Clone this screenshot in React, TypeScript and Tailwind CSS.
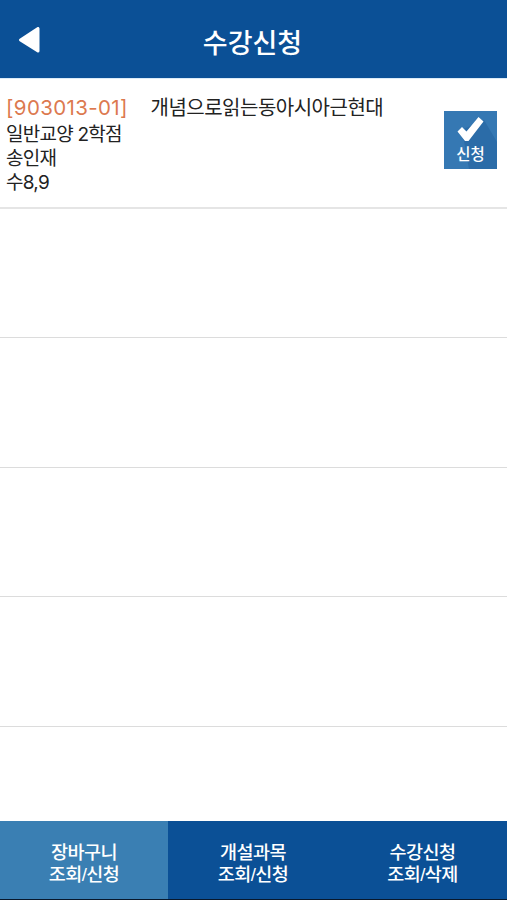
type Course = {
  code: string;
  title: string;
  category: string;
  professor: string;
  time: string;
};

const courses: Course[] = [
  {
    code: "[903013-01]",
    title: "개념으로읽는동아시아근현대",
    category: "일반교양 2학점",
    professor: "송인재",
    time: "수8,9",
  },
];

const tabs = [
  { title: "장바구니", action: "조회/신청", active: true },
  { title: "개설과목", action: "조회/신청", active: false },
  { title: "수강신청", action: "조회/삭제", active: false },
];

const Header = () => (
  <header className="grid h-[78px] shrink-0 grid-cols-[1fr_auto_1fr] items-center bg-[#0b5096] pt-[3px] text-white">
    <button aria-label="뒤로" className="ml-[18px] w-fit">
      <svg width="23" height="28" viewBox="0 0 23 28">
        <path
          d="M2.5 13 L20 1.5 V24 Z"
          fill="white"
          stroke="white"
          strokeWidth="3"
          strokeLinejoin="round"
        />
      </svg>
    </button>
    <h1 className="mr-[2px] pt-px text-[27px] leading-none font-medium">수강신청</h1>
  </header>
);

const ApplyButton = () => (
  <button className="relative mr-2.5 -mt-[6px] h-[58px] w-[53px] shrink-0 overflow-hidden bg-[#3578b3] text-white">
    <svg className="block" width="53" height="58" viewBox="0 0 53 58">
      <path d="M15 20 L20 30 L25 58 H53 V31 L40 9 Z" fill="#2b6ca8" />
      <path d="M13.5 20.5 L18 16 L22.5 20.5 L34.5 6 L39.5 10.5 L24.5 30 H21 Z" fill="white" />
    </svg>
    <span className="absolute inset-x-0 bottom-[7px] text-center text-[15.5px] leading-none font-medium">
      신청
    </span>
  </button>
);

const CourseRow = ({ course }: { course: Course }) => (
  <li className="flex h-[129.5px] shrink-0 items-center justify-between border-b-2 border-[#e5e5e5] text-[#222]">
    <div className="mt-1 pl-1.5 font-['Inter','Noto_Sans_CJK_KR',sans-serif] text-[19px] leading-[24px] tracking-[-0.75px]">
      <div className="flex h-[27px] items-center">
        <span className="w-[144.5px] text-[20.5px] tracking-[0.35px] text-[#dc794f]">
          {course.code}
        </span>
        <span className="text-[20px] tracking-[-0.5px]">{course.title}</span>
      </div>
      <div className="pt-px">
        <p>{course.category}</p>
        <p>{course.professor}</p>
        <p>{course.time}</p>
      </div>
    </div>
    <ApplyButton />
  </li>
);

const App = () => {
  return (
    <div className="flex h-screen flex-col overflow-hidden bg-white font-['Noto_Sans_CJK_KR',sans-serif]">
      <Header />
      <ul className="flex flex-1 flex-col overflow-hidden border-t border-[#dcebf8]">
        {courses.map((course) => (
          <CourseRow key={course.code} course={course} />
        ))}
        {/* blank rows fill the rest of the list */}
        {[0, 1, 2, 3].map((row) => (
          <li key={row} className="h-[129.5px] shrink-0 border-b border-[#dcdcdc]" />
        ))}
      </ul>
      <nav className="grid h-[79px] shrink-0 grid-cols-[168px_170px_169px] border-b border-[#08182c] font-['Liberation_Sans','Noto_Sans_CJK_KR',sans-serif] text-[18.5px] leading-[22px] font-medium tracking-[-0.5px] text-white">
        {tabs.map((tab) => (
          <button
            key={tab.title}
            className={
              tab.active
                ? "flex flex-col items-center justify-center bg-[#3a7fb3] pt-[7px]"
                : "flex flex-col items-center justify-center bg-[#0b5096] pt-[7px]"
            }
          >
            <span>{tab.title}</span>
            <span>{tab.action}</span>
          </button>
        ))}
      </nav>
    </div>
  );
};

export default App;
